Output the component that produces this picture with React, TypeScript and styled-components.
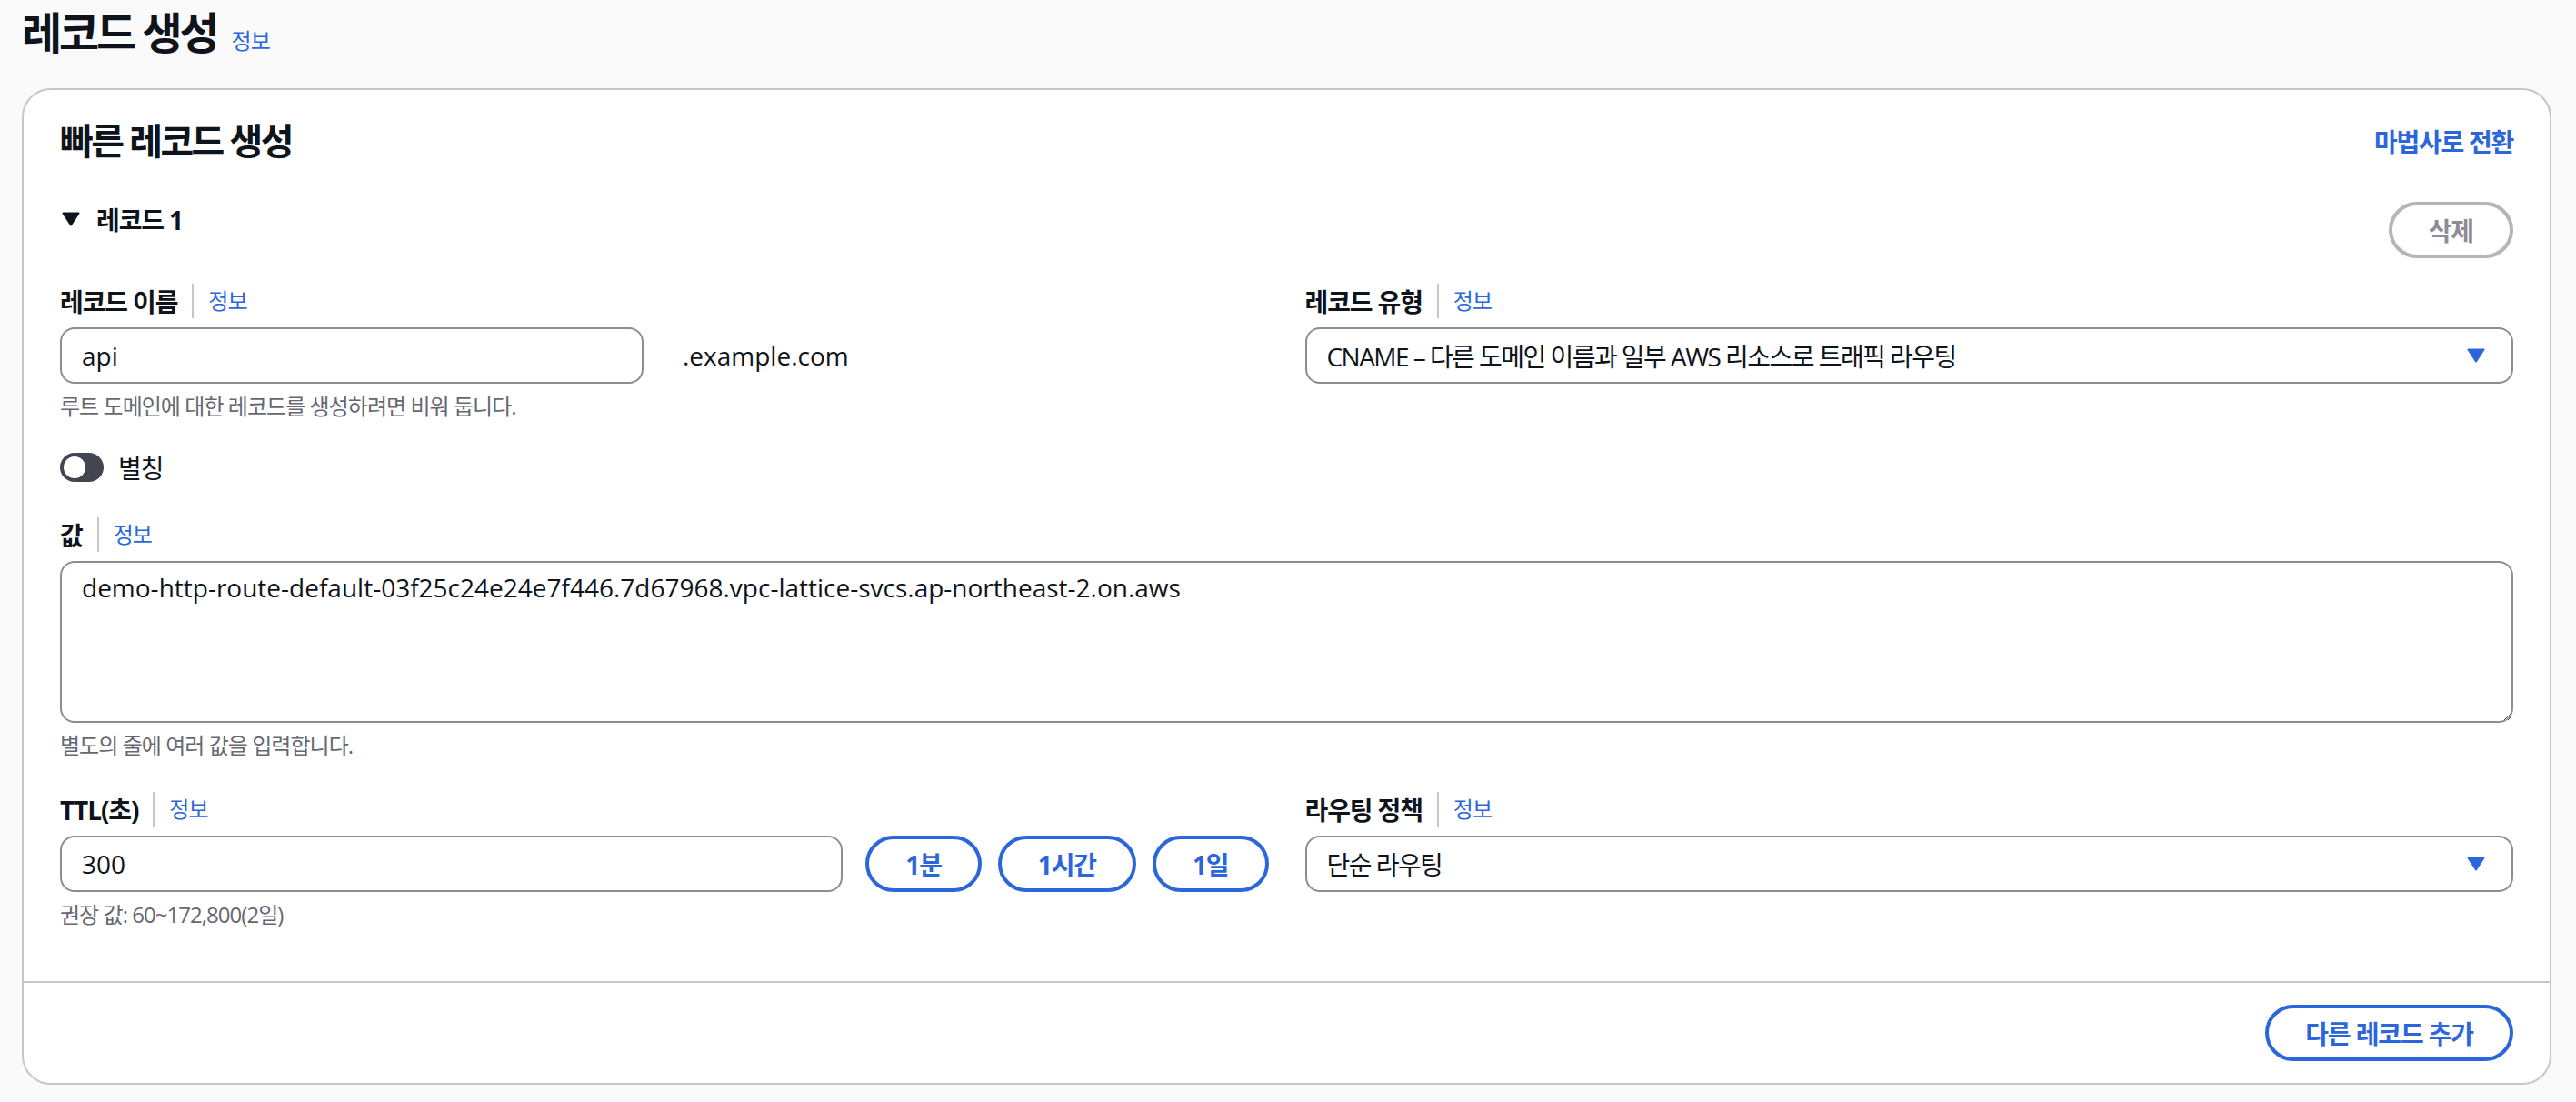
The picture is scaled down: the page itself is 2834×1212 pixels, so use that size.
import React from "react";
import styled, { createGlobalStyle } from "styled-components";

const BLUE = "#2c66dd";
const TEXT = "#0f141a";
const MUTED = "#656871";
const LINE = "#c6c6cd";
const FIELD_BORDER = "#8c8c94";

const GlobalStyle = createGlobalStyle`
  html, body {
    margin: 0;
    padding: 0;
    background: #fafafa;
  }
  body {
    font-family: "Open Sans", "Noto Sans CJK KR", sans-serif;
    color: ${TEXT};
  }
  * {
    box-sizing: border-box;
  }
`;

const Page = styled.div`
  display: flex;
  flex-direction: column;
  padding: 8px 27px 22px 24px;
`;

const TitleRow = styled.div`
  display: flex;
  align-items: baseline;
  gap: 16px;
`;

const PageTitle = styled.h1`
  margin: 0;
  font-size: 48px;
  line-height: 56px;
  font-weight: 700;
  letter-spacing: -0.065em;
`;

const InfoLink = styled.a`
  font-size: 24px;
  line-height: 32px;
  color: ${BLUE};
  letter-spacing: -0.04em;
  text-decoration: none;
  cursor: pointer;
`;

const Card = styled.section`
  margin-top: 33px;
  background: #fff;
  border: 2px solid ${LINE};
  border-radius: 32px;
  overflow: hidden;
`;

const CardBody = styled.div`
  padding: 34px 40px 57px;
`;

const CardHeader = styled.div`
  display: flex;
  align-items: center;
  justify-content: space-between;
  height: 44px;
`;

const CardTitle = styled.h2`
  margin: 0;
  font-size: 40px;
  line-height: 44px;
  font-weight: 700;
  letter-spacing: -0.065em;
`;

const WizardLink = styled.a`
  font-size: 28px;
  font-weight: 700;
  color: ${BLUE};
  letter-spacing: -0.045em;
  cursor: pointer;
`;

const RecordHeader = styled.div`
  margin-top: 42px;
  display: flex;
  justify-content: space-between;
  align-items: flex-start;
`;

const ExpandToggle = styled.div`
  display: flex;
  align-items: center;
  gap: 18px;
  height: 44px;
  padding-left: 2px;
  font-size: 28px;
  font-weight: 700;
  letter-spacing: -0.04em;
`;

const PillButton = styled.button<{ $disabled?: boolean }>`
  height: 62px;
  padding: 0 40px;
  border-radius: 31px;
  background: #fff;
  border: 4px solid ${(p) => (p.$disabled ? "#b4b4bb" : BLUE)};
  color: ${(p) => (p.$disabled ? "#8c8c94" : BLUE)};
  font-family: inherit;
  font-size: 28px;
  font-weight: 700;
  letter-spacing: -0.04em;
  white-space: nowrap;
  cursor: ${(p) => (p.$disabled ? "default" : "pointer")};
`;

const DeleteButton = styled(PillButton)`
  margin-top: 3px;
`;

const FormGrid = styled.div<{ $top: number }>`
  display: grid;
  grid-template-columns: 1fr 1fr;
  column-gap: 40px;
  margin-top: ${(p) => p.$top}px;
`;

const Field = styled.div<{ $top?: number }>`
  display: flex;
  flex-direction: column;
  margin-top: ${(p) => p.$top ?? 0}px;
`;

const LabelRow = styled.div`
  display: flex;
  align-items: center;
  height: 40px;
  margin-bottom: 9px;
`;

const Label = styled.label`
  font-size: 28px;
  font-weight: 700;
  letter-spacing: -0.04em;
`;

const LabelDivider = styled.span`
  width: 2px;
  height: 38px;
  background: ${LINE};
  margin: 0 16px;
`;

const TextInput = styled.input<{ $width?: number }>`
  height: 62px;
  ${(p) => (p.$width ? `flex: 0 0 ${p.$width}px; width: ${p.$width}px;` : "flex: 1; min-width: 0;")}
  border: 2px solid ${FIELD_BORDER};
  border-radius: 16px;
  padding: 0 22px;
  font-family: inherit;
  font-size: 28px;
  color: ${TEXT};
  background: #fff;
  outline: none;
`;

const InputRow = styled.div`
  display: flex;
  align-items: center;
`;

const DomainSuffix = styled.span`
  margin-left: 43px;
  font-size: 28px;
  color: ${TEXT};
`;

const HelpText = styled.div`
  margin-top: 9px;
  font-size: 24px;
  line-height: 32px;
  color: ${MUTED};
  letter-spacing: -0.04em;
`;

const SelectBox = styled.div`
  height: 62px;
  display: flex;
  align-items: center;
  justify-content: space-between;
  border: 2px solid ${FIELD_BORDER};
  border-radius: 16px;
  padding: 0 29px 0 22px;
  font-size: 28px;
  letter-spacing: -0.055em;
  background: #fff;
  cursor: pointer;
`;

const ToggleRow = styled.div`
  margin-top: 29px;
  display: flex;
  align-items: center;
  gap: 16px;
  height: 44px;
`;

const ToggleTrack = styled.span`
  width: 48px;
  height: 32px;
  border-radius: 16px;
  background: #424650;
  display: flex;
  align-items: center;
  padding: 0 4px;
`;

const ToggleKnob = styled.span`
  width: 24px;
  height: 24px;
  border-radius: 50%;
  background: #fff;
`;

const ToggleLabel = styled.span`
  font-size: 28px;
  letter-spacing: -0.04em;
`;

const ValueArea = styled.textarea`
  height: 178px;
  width: 100%;
  resize: vertical;
  border: 2px solid ${FIELD_BORDER};
  border-radius: 16px;
  padding: 7px 22px;
  font-family: inherit;
  font-size: 28px;
  line-height: 40px;
  color: ${TEXT};
  outline: none;
`;

const TtlRow = styled.div`
  display: flex;
  align-items: center;
  gap: 18px;

  & > input {
    margin-right: 7px;
  }
`;

const CardFooter = styled.div`
  border-top: 2px solid ${LINE};
  padding: 24px 40px;
  display: flex;
  justify-content: flex-end;
`;

const Caret = ({ color }: { color: string }) => (
  <svg width="20" height="16" viewBox="0 0 20 16" aria-hidden="true">
    <path d="M1.5 1.5 H18.5 L10 14.5 Z" fill={color} stroke={color} strokeWidth="2" strokeLinejoin="round" />
  </svg>
);

const FieldLabel = ({ children }: { children: React.ReactNode }) => (
  <LabelRow>
    <Label>{children}</Label>
    <LabelDivider />
    <InfoLink>정보</InfoLink>
  </LabelRow>
);

const App = () => {
  return (
    <>
      <GlobalStyle />
      <Page>
        <TitleRow>
          <PageTitle>레코드 생성</PageTitle>
          <InfoLink>정보</InfoLink>
        </TitleRow>

        <Card>
          <CardBody>
            <CardHeader>
              <CardTitle>빠른 레코드 생성</CardTitle>
              <WizardLink>마법사로 전환</WizardLink>
            </CardHeader>

            <RecordHeader>
              <ExpandToggle>
                <Caret color={TEXT} />
                레코드 1
              </ExpandToggle>
              <DeleteButton $disabled>삭제</DeleteButton>
            </RecordHeader>

            <FormGrid $top={27}>
              <Field>
                <FieldLabel>레코드 이름</FieldLabel>
                <InputRow>
                  <TextInput $width={642} defaultValue="api" />
                  <DomainSuffix>.example.com</DomainSuffix>
                </InputRow>
                <HelpText>루트 도메인에 대한 레코드를 생성하려면 비워 둡니다.</HelpText>
              </Field>
              <Field>
                <FieldLabel>레코드 유형</FieldLabel>
                <SelectBox>
                  <span>CNAME – 다른 도메인 이름과 일부 AWS 리소스로 트래픽 라우팅</span>
                  <Caret color={BLUE} />
                </SelectBox>
              </Field>
            </FormGrid>

            <ToggleRow>
              <ToggleTrack>
                <ToggleKnob />
              </ToggleTrack>
              <ToggleLabel>별칭</ToggleLabel>
            </ToggleRow>

            <Field $top={32}>
              <FieldLabel>값</FieldLabel>
              <ValueArea defaultValue="demo-http-route-default-03f25c24e24e7f446.7d67968.vpc-lattice-svcs.ap-northeast-2.on.aws" />
              <HelpText>별도의 줄에 여러 값을 입력합니다.</HelpText>
            </Field>

            <FormGrid $top={34}>
              <Field>
                <FieldLabel>TTL(초)</FieldLabel>
                <TtlRow>
                  <TextInput defaultValue="300" />
                  <PillButton>1분</PillButton>
                  <PillButton>1시간</PillButton>
                  <PillButton>1일</PillButton>
                </TtlRow>
                <HelpText>권장 값: 60~172,800(2일)</HelpText>
              </Field>
              <Field>
                <FieldLabel>라우팅 정책</FieldLabel>
                <SelectBox>
                  <span>단순 라우팅</span>
                  <Caret color={BLUE} />
                </SelectBox>
              </Field>
            </FormGrid>
          </CardBody>

          <CardFooter>
            <PillButton>다른 레코드 추가</PillButton>
          </CardFooter>
        </Card>
      </Page>
    </>
  );
};

export default App;
